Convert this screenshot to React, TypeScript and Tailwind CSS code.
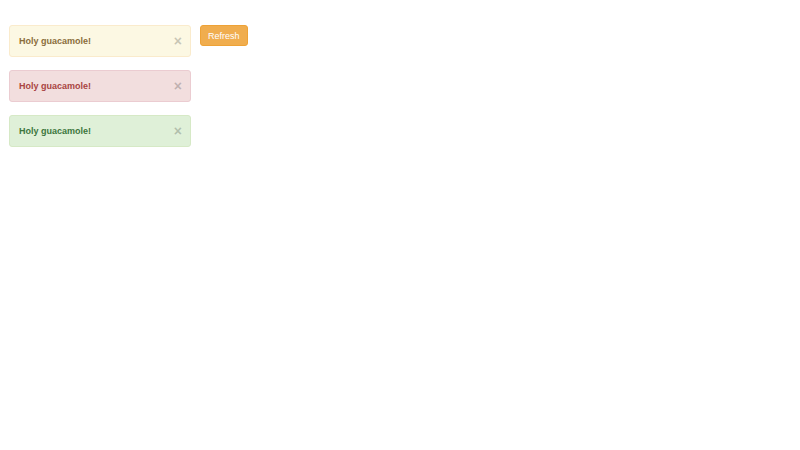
const alerts = [
  { key: "warning", box: "bg-[#fcf8e3] border-[#faebcc] text-[#8a6d3b]" },
  { key: "danger", box: "bg-[#f2dede] border-[#ebccd1] text-[#a94442]" },
  { key: "success", box: "bg-[#dff0d8] border-[#d6e9c6] text-[#3c763d]" },
];

function Alert({ box }: { box: string }) {
  return (
    <div
      className={`flex items-center justify-between border rounded-[3px] pl-[9px] pr-[8px] py-[9px] text-[9px] leading-[13px] h-[32px] ${box}`}
    >
      <strong className="font-bold">Holy guacamole!</strong>
      <span className="text-[14px] leading-[12px] font-bold text-black opacity-20 [text-shadow:0_1px_0_#fff] cursor-pointer">
        ×
      </span>
    </div>
  );
}

export default function App() {
  return (
    <div
      className="min-h-[450px] w-full bg-white pt-[25px] pl-[9px]"
      style={{ fontFamily: '"Liberation Sans", Arial, Helvetica, sans-serif' }}
    >
      <div className="flex items-start gap-[9px]">
        <div className="w-[182px] flex flex-col gap-[13px]">
          {alerts.map((a) => (
            <Alert key={a.key} box={a.box} />
          ))}
        </div>
        <button className="h-[21px] px-[7px] rounded-[3px] border border-[#eea236] bg-[#f0ad4e] text-white text-[9px] leading-[12px]">
          Refresh
        </button>
      </div>
    </div>
  );
}
